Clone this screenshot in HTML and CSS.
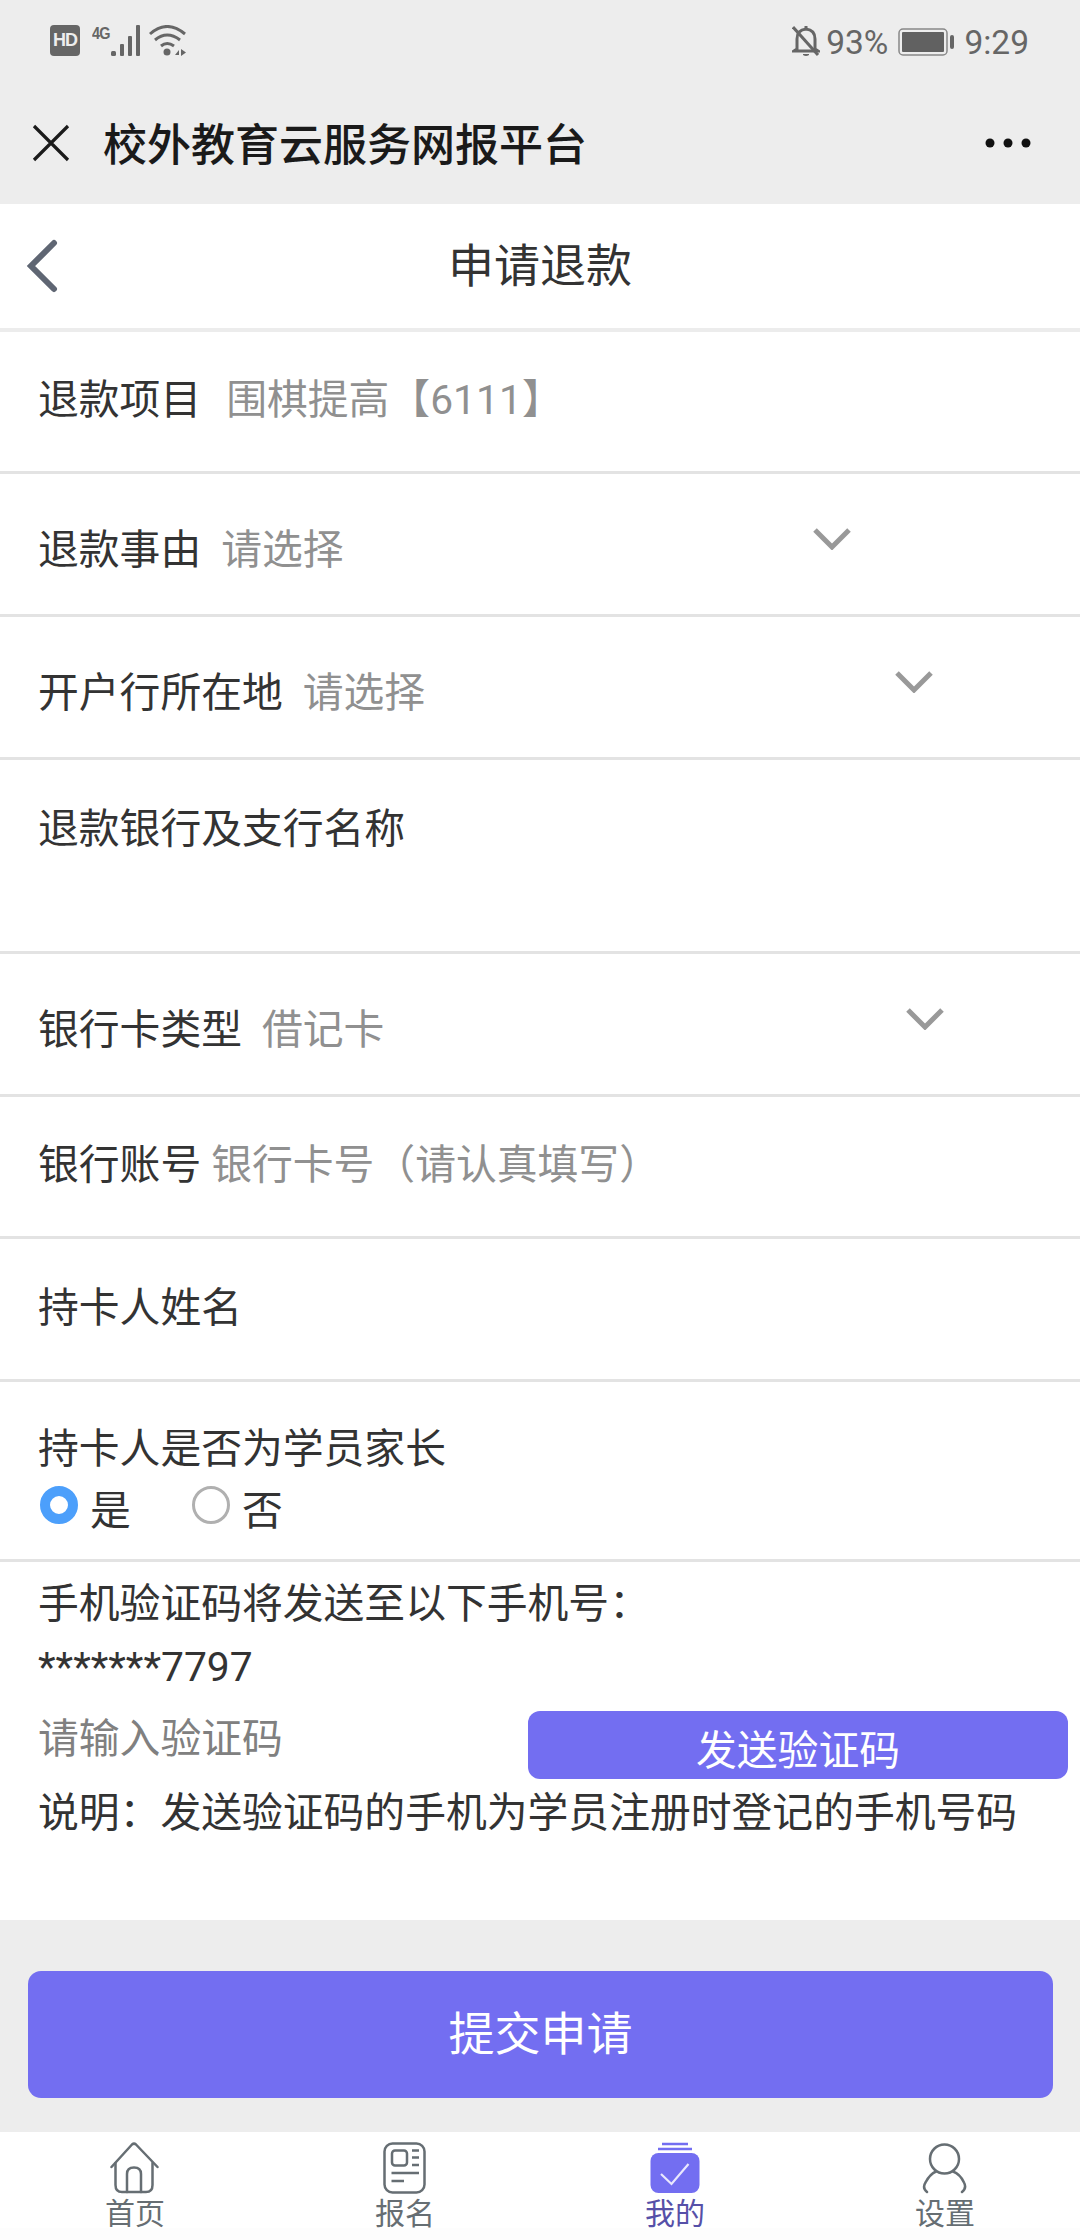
FILE: index.html
```html
<!DOCTYPE html>
<html lang="zh-CN">
<head>
<meta charset="utf-8">
<title>申请退款</title>
<link rel="stylesheet" href="styles.css">
</head>
<body>
<div class="statusbar">
  <div class="status-left">
    <span class="hd">HD</span>
    <span class="net">4G</span>
    <svg class="signal" width="36" height="32" viewBox="0 0 36 32"><rect x="2" y="26" width="5" height="5" rx="1.500"/><rect x="11" y="19" width="4" height="12" rx="1"/><rect x="19" y="11" width="4" height="20" rx="1"/><rect x="27" y="0" width="4" height="31" rx="1"/></svg>
    <svg class="wifi" width="38" height="32" viewBox="0 0 38 32"><g fill="none" stroke="#666" stroke-width="3"><path d="M1 9Q18 -6 36 9"/><path d="M6 15Q18 5 31 15"/><path d="M12 21Q18 16 25 21"/></g><circle cx="18" cy="27" r="3.500" fill="#666"/><path d="M26 30l4-5v5zM32 24l5 3.500-5 3.500z" fill="#666"/></svg>
  </div>
  <div class="status-right">
    <svg class="bell" width="28" height="32" viewBox="0 0 28 32"><path d="M5 24V14Q5 5 14 4Q23 5 23 14V24L26 26H2Z" fill="none" stroke="#666" stroke-width="3"/><path d="M11 29h6v1q-3 2-6 0z" fill="#666"/><path d="M14 1v3" stroke="#666" stroke-width="3"/><path d="M1 2L26 30" stroke="#666" stroke-width="3"/></svg>
    <span class="stat-text pct">93%</span>
    <svg class="battery" width="57" height="28" viewBox="0 0 57 28"><rect x="1" y="1" width="48" height="26" rx="4" fill="none" stroke="#888" stroke-width="1.500"/><rect x="4" y="4" width="42" height="20" rx="1" fill="#616161"/><rect x="52" y="7" width="4" height="14" rx="2" fill="#666"/></svg>
    <span class="stat-text">9:29</span>
  </div>
</div>

<div class="wxbar">
  <svg class="close" width="38" height="38" viewBox="0 0 38 38"><path d="M2 2L36 36M36 2L2 36" fill="none" stroke="#1a1a1a" stroke-width="3.200"/></svg>
  <span class="wxtitle">校外教育云服务网报平台</span>
  <svg class="more" width="46" height="10" viewBox="0 0 46 10"><circle cx="5" cy="5" r="4.500"/><circle cx="23" cy="5" r="4.500"/><circle cx="41" cy="5" r="4.500"/></svg>
</div>

<div class="pagehead">
  <svg class="back" width="34" height="54" viewBox="0 0 34 54"><path d="M30 4L7 27L30 50" fill="none" stroke="#5f6673" stroke-width="6" stroke-linecap="round"/></svg>
  <h1 class="pagetitle">申请退款</h1>
</div>

<main class="form">
  <div class="row row-a"><span class="label">退款项目</span><span class="value v-a">围棋提高【6111】</span></div>
  <div class="row row-b"><span class="label">退款事由</span><span class="value select s1">请选择<svg class="chev" width="38" height="22" viewBox="0 0 38 22"><path d="M2 2L19 19L36 2" fill="none" stroke="#999" stroke-width="5"/></svg></span></div>
  <div class="row row-b"><span class="label">开户行所在地</span><span class="value select s2">请选择<svg class="chev" width="38" height="22" viewBox="0 0 38 22"><path d="M2 2L19 19L36 2" fill="none" stroke="#999" stroke-width="5"/></svg></span></div>
  <div class="row row-bank"><span class="label">退款银行及支行名称</span></div>
  <div class="row row-b"><span class="label">银行卡类型</span><span class="value select s3">借记卡<svg class="chev" width="38" height="22" viewBox="0 0 38 22"><path d="M2 2L19 19L36 2" fill="none" stroke="#999" stroke-width="5"/></svg></span></div>
  <div class="row row-a"><span class="label">银行账号</span><span class="value v-b">银行卡号（请认真填写）</span></div>
  <div class="row row-c"><span class="label">持卡人姓名</span></div>
  <div class="row row-radio">
    <div class="label">持卡人是否为学员家长</div>
    <div class="radios">
      <span class="radio on"></span><span class="radio-text">是</span>
      <span class="radio"></span><span class="radio-text">否</span>
    </div>
  </div>
  <div class="verify">
    <div class="v-line1">手机验证码将发送至以下手机号：</div>
    <div class="v-line2">*******7797</div>
    <div class="v-code">
      <span class="v-ph">请输入验证码</span>
      <span class="send">发送验证码</span>
    </div>
    <div class="v-note">说明：发送验证码的手机为学员注册时登记的手机号码</div>
  </div>
</main>

<div class="submit-area"><div class="submit">提交申请</div></div>

<nav class="tabbar">
  <div class="tab">
    <svg width="50" height="52" viewBox="0 0 50 52"><g fill="none" stroke="#666e73" stroke-width="2.500" stroke-linecap="round" stroke-linejoin="round"><path d="M1.500 25L22 2.500Q24 .8 26 2.500L47.500 25"/><path d="M5.500 21V43Q5.500 50 12 50H36Q42.500 50 42.500 43V21"/><path d="M17 50V32Q17 25.500 24 25.500Q31 25.500 31 32V50"/></g></svg>
    <span class="tab-label">首页</span>
  </div>
  <div class="tab">
    <svg width="44" height="52" viewBox="0 0 44 52"><g fill="none" stroke="#666e73" stroke-width="2.500"><rect x="1.500" y="1.500" width="40" height="49" rx="8"/><rect x="9" y="8.500" width="15" height="15" rx="3"/><path d="M29 8.500H36M29 15.500H36M29 23H36M8.500 31H36M8.500 39H21"/></g></svg>
    <span class="tab-label">报名</span>
  </div>
  <div class="tab tab-on">
    <svg width="50" height="52" viewBox="0 0 50 52"><path d="M12 2H38M8 7H42" fill="none" stroke="#736ef1" stroke-width="2.500"/><rect x="0.500" y="11" width="49" height="40" rx="8" fill="#736ef1"/><path d="M11 32L21.500 42L38.500 22" fill="none" stroke="#e9e8fd" stroke-width="2.200"/></svg>
    <span class="tab-label">我的</span>
  </div>
  <div class="tab">
    <svg width="46" height="52" viewBox="0 0 46 52"><g fill="none" stroke="#666e73" stroke-width="2.500" stroke-linecap="round"><circle cx="22.500" cy="17" r="14.500"/><path d="M5 50Q0 46 3.500 40.500Q8 32 14 29.500M31 29.500Q38 32 42 40.500Q45 46 40 50"/></g></svg>
    <span class="tab-label">设置</span>
  </div>
</nav>
<div class="tab-foot"></div>
</body>
</html>
```
FILE: styles.css
```css
* { box-sizing: border-box; }
html, body { margin: 0; padding: 0; }
body {
  width: 1080px;
  height: 2240px;
  overflow: hidden;
  background: #ededed;
  color: #333;
  font-family: Roboto, "Noto Sans CJK SC", sans-serif;
  font-size: 40.8px;
}

/* status bar */
.statusbar {
  height: 88px;
  display: flex;
  justify-content: space-between;
  align-items: flex-start;
  padding: 25px 51px 0 50px;
}
.status-left, .status-right { display: flex; align-items: flex-start; }
.hd {
  width: 30px; height: 31px; margin-top: 0;
  background: #666; color: #ededed; border-radius: 4px;
  font: bold 18px/31px "Liberation Sans", sans-serif;
  text-align: center; letter-spacing: -1px;
}
.net {
  width: 17px; margin-left: 12px;
  font: bold 17px/17px "Liberation Sans", sans-serif;
  color: #666; letter-spacing: -1px; transform-origin: left top; transform: scaleX(.85);
}
.signal { fill: #666; }
.wifi { margin-left: 4px; }
.bell { margin-right: 6px; }
.stat-text { font: 33.500px/36px Roboto, sans-serif; color: #666; }
.battery { margin: 3px 9px 0 10px; }

/* wechat bar */
.wxbar {
  height: 116px;
  display: flex;
  align-items: center;
  padding: 0 49px 6px 32px;
}
.close { margin-right: 33px; flex: none; }
.wxtitle { font-size: 44px; font-weight: 500; color: #1a1a1a; flex: 1; line-height: 60px; padding-top: 6px; }
.more { fill: #111; flex: none; }

/* page head */
.pagehead {
  height: 128px;
  background: #fff;
  border-bottom: 4px solid #ececec;
  display: grid;
  grid-template-columns: 1fr auto 1fr;
  align-items: center;
}
.back { margin-left: 24px; }
.pagetitle { grid-column: 2; margin: 0; font-size: 46px; font-weight: 400; color: #333; line-height: 60px; }

/* form */
.form { background: #fff; height: 1588px; }
.row {
  display: flex;
  align-items: center;
  height: 143px;
  padding: 0 0 0 38px;
  border-bottom: 3px solid #e3e3e3;
}
.row-a { height: 142px; padding-bottom: 4px; }
.row-b { padding-top: 12px; }
.row-c { padding-bottom: 2px; }
.row-bank { height: 194px; align-items: flex-start; padding-top: 41px; }
.label { line-height: 56px; color: #333; flex: none; }
.value { color: #909090; margin-left: 25px; line-height: 56px; }
.select { display: flex; align-items: flex-start; justify-content: space-between; flex: none; height: 56px; margin-left: 20px; }
.s1 { width: 630px; }
.s2 { width: 630px; }
.s3 { width: 682px; }
.chev { margin-top: 6px; }
.v-b { margin-left: 10px; }

.row-radio {
  height: 180px;
  display: block;
  padding-top: 39px;
}
.radios { display: flex; align-items: flex-start; height: 56px; margin: 0 0 0 2px; }
.radio {
  width: 38px; height: 38px; border-radius: 50%;
  border: 3px solid #b0b0b0; flex: none; margin-right: 12px; margin-top: 9px;
}
.radio.on { border: 10px solid #4c9ffb; }
.radio-text { line-height: 56px; width: 102px; margin-top: 6px; }

.verify { padding: 14px 12px 0 38px; }
.v-line1 { line-height: 56px; }
.v-line2 { line-height: 56px; margin-top: 7px; }
.v-code { display: flex; justify-content: space-between; align-items: center; height: 68px; margin-top: 16px; }
.v-ph { color: #808080; line-height: 56px; margin-bottom: 12px; }
.send {
  width: 540px; height: 68px;
  background: #736ef1; color: #fff; border-radius: 12px;
  font-size: 40.800px; line-height: 80px; text-align: center; overflow: hidden;
}
.v-note { line-height: 56px; margin-top: 6px; white-space: nowrap; }

/* submit */
.submit-area { height: 212px; padding: 51px 27px 0 28px; }
.submit {
  height: 127px;
  background: #736ef1; color: #fff; border-radius: 13px;
  font-size: 46px; line-height: 126px; text-align: center;
}

/* tabs */
.tabbar {
  height: 96px;
  background: #fff;
  display: grid;
  grid-template-columns: repeat(4, 270px);
  overflow: hidden;
  padding-top: 10px;
}
.tab { display: flex; flex-direction: column; align-items: center; color: #666e73; }
.tab svg { flex: none; display: block; }
.tab-label { font-size: 30px; line-height: 36px; margin-top: 2px; white-space: nowrap; flex: none; }
.tab-on { color: #5650a8; }
.tab-foot { height: 12px; background: #fdfdfd; }
```
